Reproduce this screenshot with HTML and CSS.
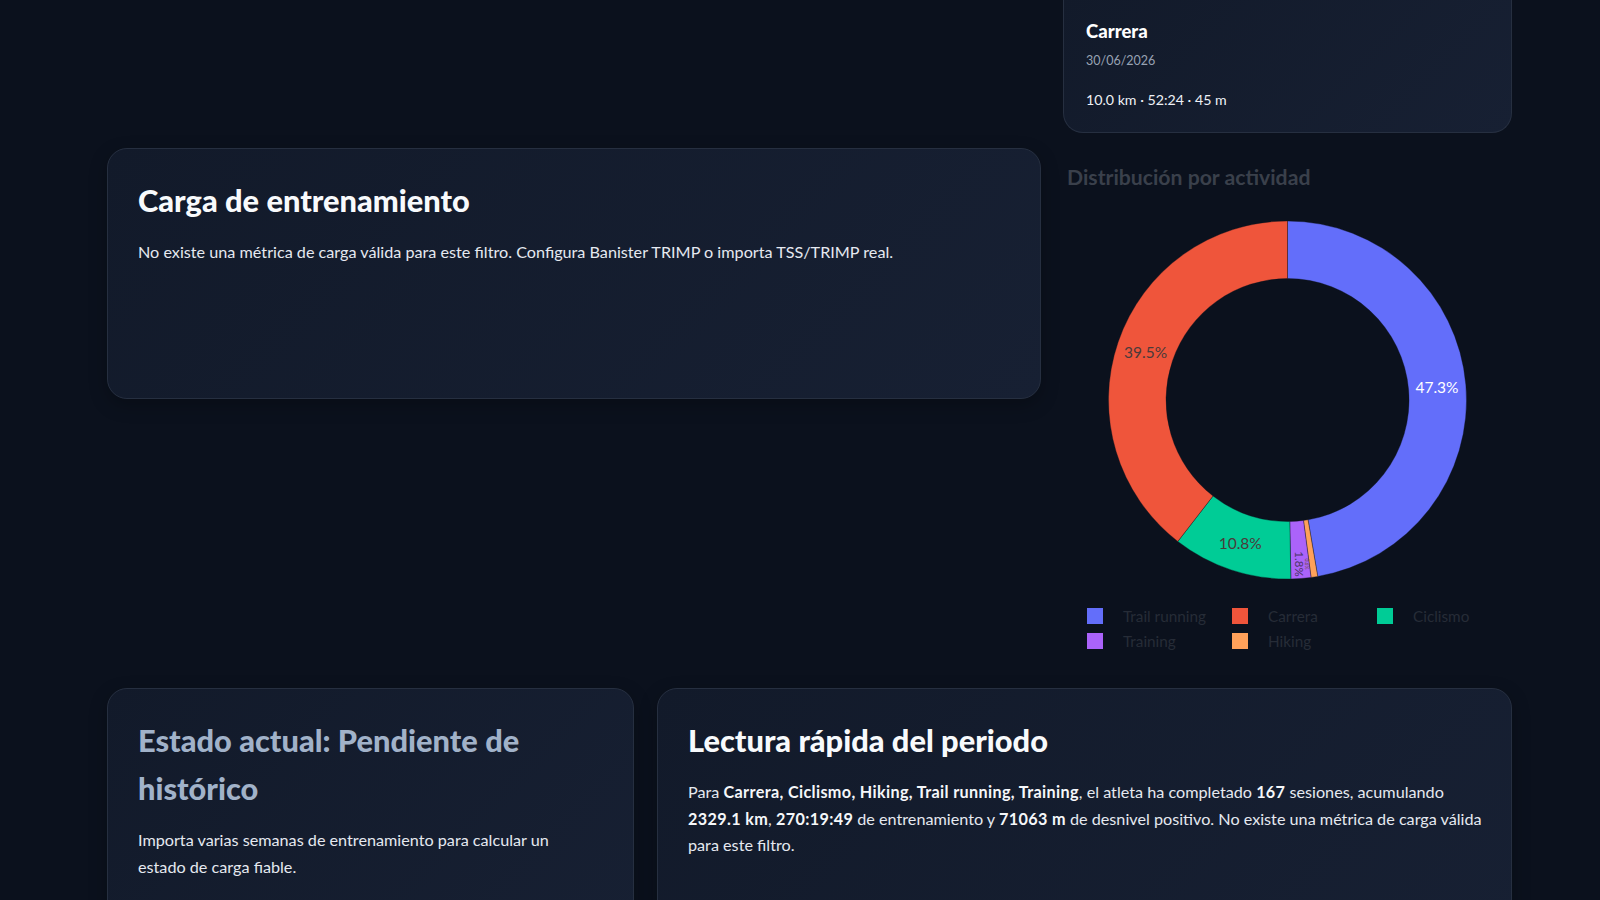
FILE: index.html
```html
<!DOCTYPE html>
<html lang="es">
<head>
  <meta charset="UTF-8">
  <meta name="viewport" content="width=device-width, initial-scale=1.0">
  <title>Resumen de entrenamiento</title>
  <link rel="stylesheet" href="styles.css">
</head>
<body>
  <div class="page">
    <div class="top-row">
      <div class="left-col">
        <section class="card load-card">
          <h3 class="card-title">Carga de entrenamiento</h3>
          <p class="card-text">No existe una métrica de carga válida para este filtro. Configura Banister TRIMP o importa TSS/TRIMP real.</p>
        </section>
      </div>

      <div class="right-col">
        <div class="activity-card">
          <div class="activity-name">Carrera</div>
          <div class="activity-date">30/06/2026</div>
          <div class="activity-stats">10.0 km · 52:24 · 45 m</div>
        </div>

        <div class="chart">
          <div class="chart-title">Distribución por actividad</div>
          <!-- donut: sectores en sentido horario desde las 12 -->
          <svg class="donut" width="449" height="370" viewBox="0 0 449 370">
            <path class="seg" fill="#636efa" d="M224.5 6 A179 179 0 0 1 254.72 361.43 L245.02 304.76 A121.5 121.5 0 0 0 224.5 63.5 Z"/>
            <path class="seg" fill="#ffa15a" d="M254.72 361.43 A179 179 0 0 1 248.05 362.44 L240.49 305.44 A121.5 121.5 0 0 0 245.02 304.76 Z"/>
            <path class="seg" fill="#ab63fa" d="M248.05 362.44 A179 179 0 0 1 227.87 363.97 L226.79 306.48 A121.5 121.5 0 0 0 240.49 305.44 Z"/>
            <path class="seg" fill="#00cc96" d="M227.87 363.97 A179 179 0 0 1 114.79 326.44 L150.03 281 A121.5 121.5 0 0 0 226.79 306.48 Z"/>
            <path class="seg" fill="#ef553b" d="M114.79 326.44 A179 179 0 0 1 224.5 6 L224.5 63.5 A121.5 121.5 0 0 0 150.03 281 Z"/>
            <text x="374" y="172" class="pct light">47.3%</text>
            <text x="82.6" y="136.5" class="pct">39.5%</text>
            <text x="177.2" y="327.5" class="pct">10.8%</text>
            <text x="236" y="349" class="pct small" transform="rotate(90 236 349)">1.8%</text>
            <text x="244" y="349" class="pct tiny" transform="rotate(90 244 349)">0.6%</text>
          </svg>
          <div class="legend">
            <div class="legend-item"><span class="swatch trail"></span>Trail running</div>
            <div class="legend-item"><span class="swatch road"></span>Carrera</div>
            <div class="legend-item"><span class="swatch bike"></span>Ciclismo</div>
            <div class="legend-item"><span class="swatch gym"></span>Training</div>
            <div class="legend-item"><span class="swatch hike"></span>Hiking</div>
          </div>
        </div>
      </div>
    </div>

    <div class="bottom-row">
      <section class="card state-card">
        <h3 class="card-title pending">Estado actual: Pendiente de histórico</h3>
        <p class="card-text">Importa varias semanas de entrenamiento para calcular un estado de carga fiable.</p>
      </section>
      <section class="card summary-card">
        <h3 class="card-title">Lectura rápida del periodo</h3>
        <p class="card-text">Para <b>Carrera, Ciclismo, Hiking, Trail running, Training</b>, el atleta ha completado <b>167</b> sesiones, acumulando <b>2329.1 km</b>, <b>270:19:49</b> de entrenamiento y <b>71063 m</b> de desnivel positivo. No existe una métrica de carga válida para este filtro.</p>
      </section>
    </div>
  </div>
</body>
</html>
```

FILE: styles.css
```css
body {
  margin: 0;
  background-color: #0b111d;
  color: #e5e9f0;
  font-family: Lato, "Noto Sans", sans-serif;
  overflow: hidden;
}
.page {
  width: 1405px;
  margin: -6px 0 0 107px;
}
.top-row {
  display: grid;
  grid-template-columns: 934px 449px;
  gap: 22px;
}
.bottom-row {
  display: grid;
  grid-template-columns: 527px 855px;
  gap: 23px;
  margin-top: 35px;
}
.card {
  background: linear-gradient(135deg, #121a2a 0%, #172033 100%);
  border: 1px solid #262f40;
  border-radius: 20px;
  padding: 28px 30px;
  box-shadow: 0 6px 18px rgba(0, 0, 0, 0.25);
}
.load-card {
  margin-top: 154px;
  height: 251px;
  box-sizing: border-box;
}
.state-card,
.summary-card {
  height: 260px;
  box-sizing: border-box;
}
.state-card {
  padding-right: 42px;
}
.summary-card {
  padding-right: 24px;
}
.card-title {
  margin: 0 0 14px;
  font-size: 30.8px;
  line-height: 48px;
  font-weight: 900;
  color: #f8fafc;
}
.card-title.pending {
  color: #a1b2c9;
}
.card-text {
  margin: 0;
  font-size: 16.2px;
  line-height: 26.5px;
  color: #e5e9f0;
}
.card-text b {
  font-weight: 700;
  letter-spacing: 0.35px;
  color: #f5f7fa;
}
.activity-card {
  background: linear-gradient(135deg, #121a2a 0%, #172033 100%);
  border: 1px solid #262f40;
  border-top: none;
  border-radius: 0 0 20px 20px;
  padding: 24px 22px 21px;
}
.activity-name {
  font-size: 18.5px;
  line-height: 26px;
  font-weight: 900;
  color: #ffffff;
}
.activity-date {
  margin-top: 7px;
  font-size: 12.5px;
  line-height: 20px;
  color: #98a2b3;
}
.activity-stats {
  margin-top: 18px;
  font-size: 14.2px;
  line-height: 22px;
  color: #eef1f6;
}
.chart {
  padding-top: 32px;
}
.chart-title {
  padding-left: 4px;
  font-size: 21.2px;
  line-height: 24px;
  font-weight: 700;
  color: #3a404b;
}
.donut {
  display: block;
  margin-top: 26px;
}
.seg {
  stroke: #0b111d;
  stroke-width: 0.6;
  stroke-opacity: 0.6;
}
.pct {
  font-family: Lato, "Noto Sans", sans-serif;
  font-size: 15.5px;
  text-anchor: middle;
  dominant-baseline: central;
  fill: #4a3a3a;
}
.pct.light {
  fill: #ffffff;
}
.pct.small {
  font-size: 11.5px;
  fill: #4b3566;
}
.pct.tiny {
  font-size: 5px;
  fill: #6b4a2a;
}
.legend {
  display: grid;
  grid-template-columns: repeat(3, 145px);
  margin-top: 18px;
  padding-left: 24px;
}
.legend-item {
  display: flex;
  align-items: center;
  gap: 20px;
  height: 25px;
  font-size: 15.3px;
  color: #262c37;
}
.swatch {
  width: 16px;
  height: 16px;
  flex-shrink: 0;
}
.swatch.trail { background-color: #636efa; }
.swatch.road { background-color: #ef553b; }
.swatch.bike { background-color: #00cc96; }
.swatch.gym { background-color: #ab63fa; }
.swatch.hike { background-color: #ffa15a; }
```
